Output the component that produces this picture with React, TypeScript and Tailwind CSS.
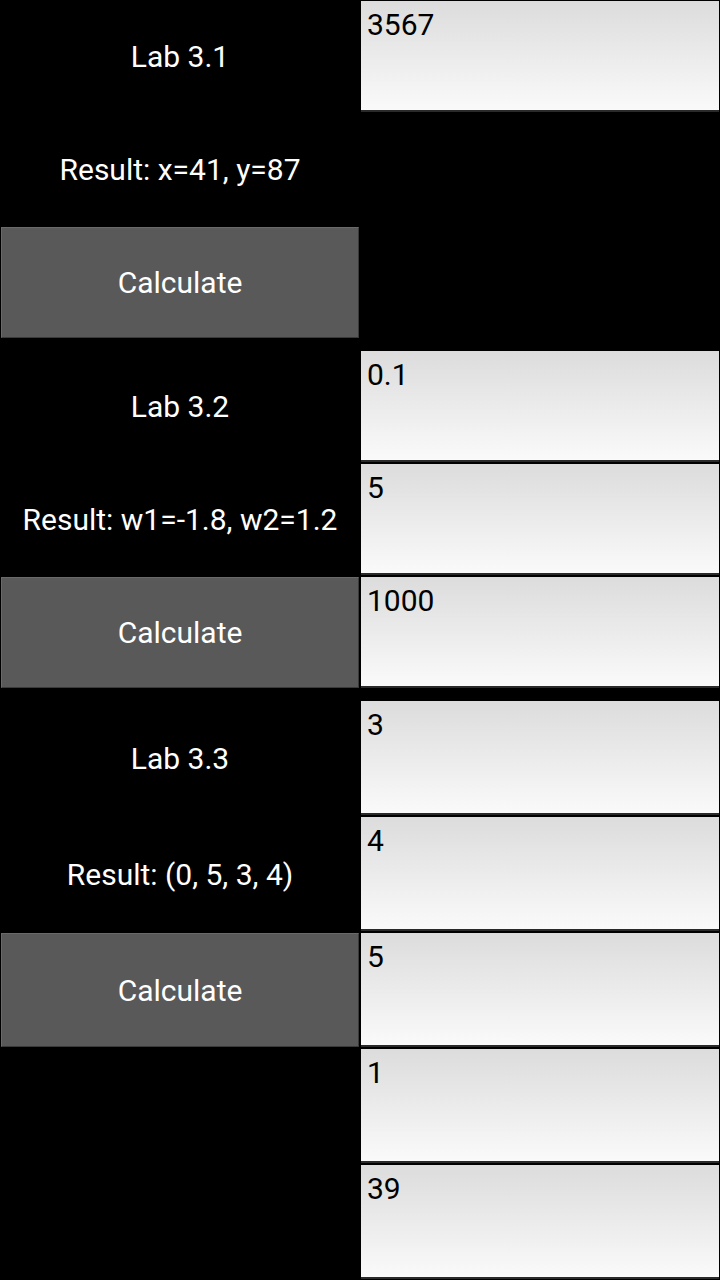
import React from 'react';

const font = { fontFamily: 'Roboto, "Noto Sans", sans-serif' };

function Label({ text, h }: { text: string; h: string }) {
  return (
    <div className={`${h} flex items-center justify-center text-white text-[30px]`}>
      {text}
    </div>
  );
}

function CalcButton({ h }: { h: string }) {
  return (
    <div className={`${h} p-px`}>
      <button className="w-full h-full bg-[#595959] border-t border-l border-[#6a6a6a] border-b border-r border-b-[#3a3a3a] border-r-[#3a3a3a] text-white text-[30px] flex items-center justify-center">
        Calculate
      </button>
    </div>
  );
}

function Field({ value, h }: { value: string; h: string }) {
  return (
    <div className={`${h} p-px`}>
      <div className="w-full h-full bg-gradient-to-b from-[#dcdcdc] to-[#fafafa] border-b-2 border-[#2a2a2a] text-black text-[30px] leading-none pl-[6px] pt-[9px]">
        {value}
      </div>
    </div>
  );
}

export default function App() {
  return (
    <div className="w-[720px] h-[1280px] bg-black overflow-hidden" style={font}>
      {/* Lab 3.1 */}
      <div className="flex h-[350px]">
        <div className="w-[360px] flex flex-col">
          <Label text="Lab 3.1" h="h-[113px]" />
          <Label text="Result: x=41, y=87" h="h-[113px]" />
          <CalcButton h="h-[113px]" />
        </div>
        <div className="w-[360px] flex flex-col">
          <Field value="3567" h="h-[113px]" />
        </div>
      </div>

      {/* Lab 3.2 */}
      <div className="flex h-[350px]">
        <div className="w-[360px] flex flex-col">
          <Label text="Lab 3.2" h="h-[113px]" />
          <Label text="Result: w1=-1.8, w2=1.2" h="h-[113px]" />
          <CalcButton h="h-[113px]" />
        </div>
        <div className="w-[360px] flex flex-col">
          <Field value="0.1" h="h-[113px]" />
          <Field value="5" h="h-[113px]" />
          <Field value="1000" h="h-[113px]" />
        </div>
      </div>

      {/* Lab 3.3 */}
      <div className="flex h-[580px]">
        <div className="w-[360px] flex flex-col">
          <Label text="Lab 3.3" h="h-[116px]" />
          <Label text="Result: (0, 5, 3, 4)" h="h-[116px]" />
          <CalcButton h="h-[116px]" />
        </div>
        <div className="w-[360px] flex flex-col">
          <Field value="3" h="h-[116px]" />
          <Field value="4" h="h-[116px]" />
          <Field value="5" h="h-[116px]" />
          <Field value="1" h="h-[116px]" />
          <Field value="39" h="h-[116px]" />
        </div>
      </div>
    </div>
  );
}
